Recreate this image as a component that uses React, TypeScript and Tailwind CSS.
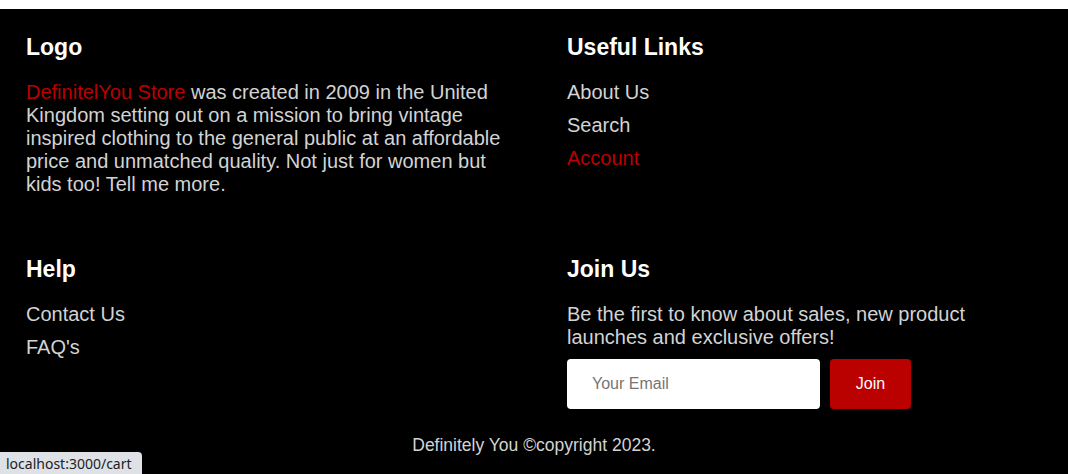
import React from 'react';

const linkClass = 'block text-[20px] leading-[23px] text-[#d3d3d3] mb-[10px]';

const FooterHeading: React.FC<{ children: React.ReactNode }> = ({ children }) => (
  <h3 className="text-[23px] leading-[26px] font-bold text-white mb-[21px]">{children}</h3>
);

export default function App() {
  return (
    <div className="min-h-[474px] bg-black font-['Liberation_Sans',Arial,sans-serif] relative">
      <div className="h-[9px] bg-white" />
      <footer className="pt-[25px] pb-[21px]">
        <div className="grid grid-cols-[490px_1fr] gap-x-[51px] gap-y-[60px] px-[26px]">
          <div>
            <FooterHeading>Logo</FooterHeading>
            <p className="text-[20px] leading-[23px] text-[#d3d3d3]">
              <span className="text-[#bb0000]">DefinitelYou Store</span> was created in 2009 in the United
              Kingdom setting out on a mission to bring vintage inspired clothing to the general public at an
              affordable price and unmatched quality. Not just for women but kids too! Tell me more.
            </p>
          </div>

          <div>
            <FooterHeading>Useful Links</FooterHeading>
            <a href="#" className={linkClass}>About Us</a>
            <a href="#" className={linkClass}>Search</a>
            <a href="#" className="block text-[20px] leading-[23px] text-[#bb0000]">Account</a>
          </div>

          <div>
            <FooterHeading>Help</FooterHeading>
            <a href="#" className={linkClass}>Contact Us</a>
            <a href="#" className={linkClass}>FAQ's</a>
          </div>

          <div>
            <FooterHeading>Join Us</FooterHeading>
            <p className="text-[20px] leading-[23px] text-[#d3d3d3] mb-[10px]">
              Be the first to know about sales, new product launches and exclusive offers!
            </p>
            <form className="flex gap-[10px]" onSubmit={(e) => e.preventDefault()}>
              <input
                type="email"
                placeholder="Your Email"
                className="w-[253px] h-[50px] rounded-[4px] bg-white px-[25px] text-[16px] text-black placeholder:text-[#757575] outline-none"
              />
              <button
                type="submit"
                className="w-[81px] h-[50px] rounded-[4px] bg-[#bb0000] text-white text-[16px]"
              >
                Join
              </button>
            </form>
          </div>
        </div>

        <p className="mt-[26px] text-center text-[17.5px] leading-[20px] text-[#d3d3d3]">
          Definitely You ©copyright 2023.
        </p>
      </footer>

      <div className="fixed left-0 bottom-0 h-[22px] w-[142px] bg-[#dee1e6] rounded-tr-[4px] px-[6px] flex items-center text-[14px] text-[#202124] font-['Noto_Sans',sans-serif]">
        localhost:3000/cart
      </div>
    </div>
  );
}
